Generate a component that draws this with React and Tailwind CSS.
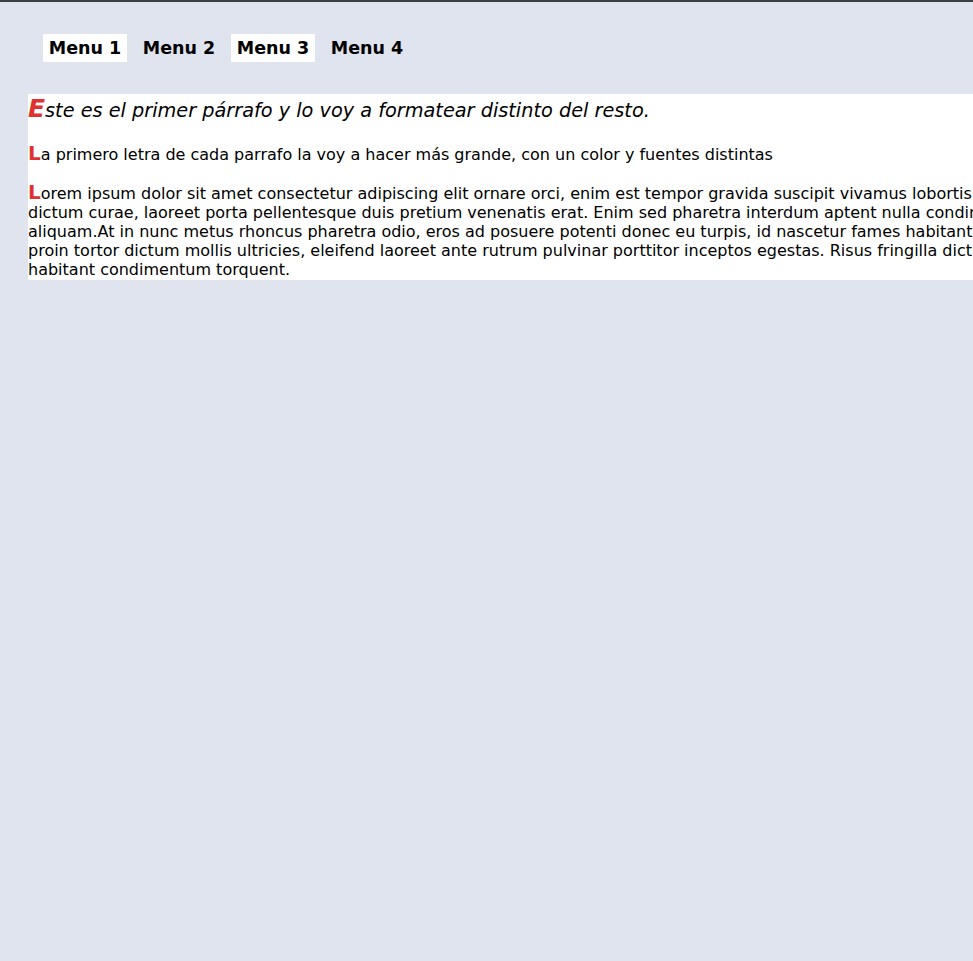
export default function App() {
  const menus = ["Menu 1", "Menu 2", "Menu 3", "Menu 4"];

  return (
    <div
      className="min-h-[961px] w-[973px] overflow-hidden bg-[#e0e4ef] border-t-2 border-[#3b3e43] text-black"
      style={{ fontFamily: '"DejaVu Sans", Verdana, sans-serif' }}
    >
      <nav className="pt-8 pl-[43px]">
        <ul className="flex gap-[10px]">
          {menus.map((m, i) => (
            <li
              key={m}
              className={`w-[84px] h-[28px] flex items-center justify-center text-[17.5px] font-bold pt-[1px] ${
                i % 2 === 0 ? "bg-white" : ""
              }`}
            >
              {m}
            </li>
          ))}
        </ul>
      </nav>

      <section className="mt-8 ml-[28px] w-[1200px] bg-white pt-[1px] pb-[1px] text-[16px] leading-[19px] whitespace-nowrap">
        <p className="text-[19.3px] italic leading-[24px] mt-[4px]">
          <span className="text-[25px] leading-[0] font-bold text-[#e0332f]">E</span>
          ste es el primer párrafo y lo voy a formatear distinto del resto.
        </p>

        <p className="mt-[22px]">
          <span className="text-[20px] leading-[0] font-bold text-[#e0332f]">L</span>
          a primero letra de cada parrafo la voy a hacer más grande, con un color y fuentes distintas
        </p>

        <p className="mt-[20px]">
          <span className="text-[20px] leading-[0] font-bold text-[#e0332f]">L</span>
          orem ipsum dolor sit amet consectetur adipiscing elit ornare orci, enim est tempor gravida suscipit vivamus lobortis sociis
          <br />
          dictum curae, laoreet porta pellentesque duis pretium venenatis erat. Enim sed pharetra interdum aptent nulla condimentum
          <br />
          aliquam.At in nunc metus rhoncus pharetra odio, eros ad posuere potenti donec eu turpis, id nascetur fames habitant
          <br />
          proin tortor dictum mollis ultricies, eleifend laoreet ante rutrum pulvinar porttitor inceptos egestas. Risus fringilla dictum
          <br />
          habitant condimentum torquent.
        </p>
      </section>
    </div>
  );
}
